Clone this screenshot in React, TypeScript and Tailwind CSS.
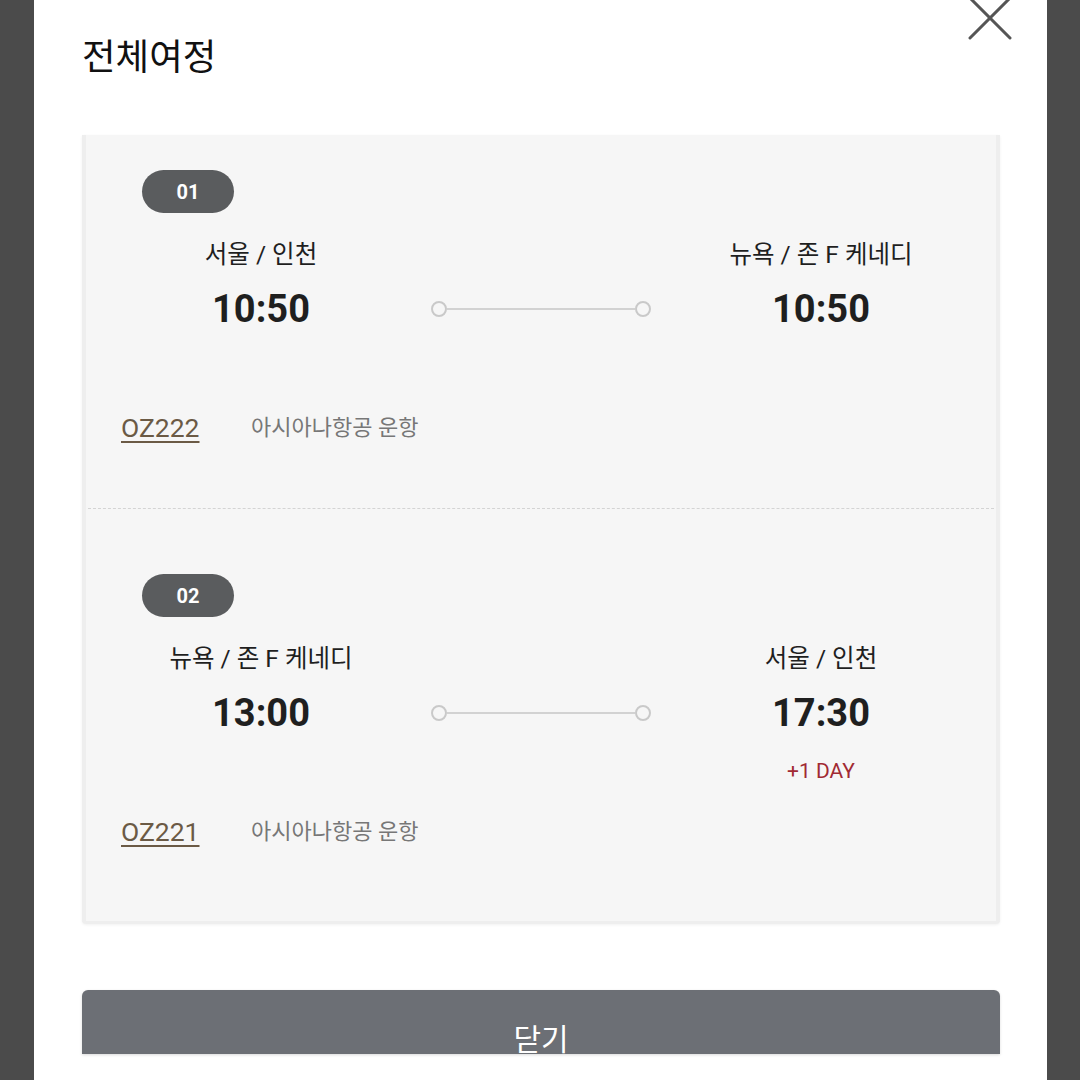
const font = "font-['Roboto','Noto_Sans_CJK_KR',sans-serif]";

type Leg = {
  no: string;
  from: string;
  to: string;
  dep: string;
  arr: string;
  extra?: string;
  flight: string;
};

const legs: Leg[] = [
  { no: '01', from: '서울 / 인천', to: '뉴욕 / 존 F 케네디', dep: '10:50', arr: '10:50', flight: 'OZ222' },
  { no: '02', from: '뉴욕 / 존 F 케네디', to: '서울 / 인천', dep: '13:00', arr: '17:30', extra: '+1 DAY', flight: 'OZ221' },
];

const Segment = ({ leg, first }: { leg: Leg; first: boolean }) => (
  <div className={first ? 'pt-[35px] pb-[63px]' : 'pt-[65px] pb-[72px]'}>
    <div className="ml-[56px] flex h-[43px] w-[92px] items-center justify-center rounded-full bg-[#5a5c5e] text-[20px] font-bold text-white">
      {leg.no}
    </div>
    <div className="mt-[26px] grid grid-cols-[240px_1fr_240px] px-[55px] text-[#1f1f1f]">
      <div className="whitespace-nowrap text-center text-[24.5px] leading-[32px]">{leg.from}</div>
      <div />
      <div className="whitespace-nowrap text-center text-[24.5px] leading-[32px]">{leg.to}</div>

      <div className="mt-[15px] text-center text-[38px] font-bold leading-[46px]">{leg.dep}</div>
      <div className="mt-[15px] flex items-center justify-center">
        <div className="flex w-[220px] items-center">
          <div className="h-[16px] w-[16px] rounded-full border-2 border-[#c9c9c9] bg-[#f6f6f6]" />
          <div className="h-[2px] flex-1 bg-[#d2d2d2]" />
          <div className="h-[16px] w-[16px] rounded-full border-2 border-[#c9c9c9] bg-[#f6f6f6]" />
        </div>
      </div>
      <div className="mt-[15px] text-center text-[38px] font-bold leading-[46px]">{leg.arr}</div>

      <div />
      <div />
      <div className="mt-[22px] h-[26px] text-center text-[21px] leading-[26px] text-[#a12a33]">{leg.extra}</div>
    </div>
    <div className="mt-[31px] flex items-center pl-[35px]">
      <span className="w-[130px] text-[26.5px] leading-[34px] text-[#6b5a45] underline decoration-2 underline-offset-[4px]">
        {leg.flight}
      </span>
      <span className="text-[22px] leading-[34px] text-[#777777]">아시아나항공 운항</span>
    </div>
  </div>
);

export default function App() {
  return (
    <div className={`flex h-[1080px] w-full overflow-hidden bg-[#4b4b4b] ${font}`}>
      <div className="relative ml-[34px] h-[1080px] w-[1013px] bg-white">
        <svg className="absolute left-[930px] top-[-8px] h-[52px] w-[52px]" viewBox="0 0 52 52">
          <line x1="6" y1="6" x2="46" y2="46" stroke="#555" strokeWidth="3" strokeLinecap="round" />
          <line x1="46" y1="6" x2="6" y2="46" stroke="#555" strokeWidth="3" strokeLinecap="round" />
        </svg>

        <div className="h-[135px] pl-[48px] pt-[37px]">
          <h1 className="text-[36.5px] font-normal leading-[42px] text-[#111]">전체여정</h1>
        </div>

        <div className="ml-[48px] w-[918px] rounded-b-[4px] border-x-[4px] border-b-[3px] border-[#eeeeee] bg-[#f6f6f6] shadow-[0_1px_3px_rgba(0,0,0,0.06)]">
          <Segment leg={legs[0]} first />
          <div className="mx-[2px] border-t border-dashed border-[#d4d4d4]" />
          <Segment leg={legs[1]} first={false} />
        </div>

        <div className="ml-[48px] mt-[66px] h-[64px] w-[918px] overflow-hidden rounded-t-[6px] bg-[#6c6f75] shadow-[0_1px_3px_rgba(0,0,0,0.15)]">
          <div className="pt-[35px] text-center text-[30px] leading-[30px] text-white">닫기</div>
        </div>
      </div>
    </div>
  );
}
